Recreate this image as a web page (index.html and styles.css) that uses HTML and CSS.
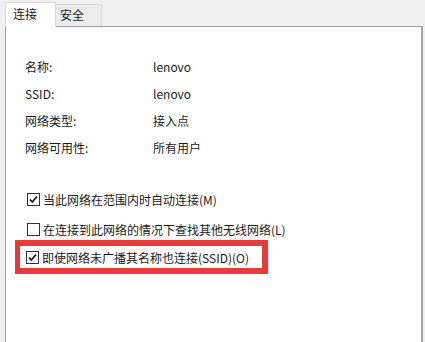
FILE: index.html
```html
<!DOCTYPE html>
<html lang="zh-CN">
<head>
  <meta charset="UTF-8">
  <title>lenovo 无线网络属性</title>
  <link rel="stylesheet" href="styles.css">
</head>
<body>
  <div class="tabs">
    <div class="tab active">连接</div>
    <div class="tab">安全</div>
  </div>
  <div class="panel">
    <!-- 网络信息 -->
    <div class="info">
      <div class="info-row"><span class="label">名称:</span><span class="value">lenovo</span></div>
      <div class="info-row"><span class="label">SSID:</span><span class="value">lenovo</span></div>
      <div class="info-row"><span class="label">网络类型:</span><span class="value">接入点</span></div>
      <div class="info-row"><span class="label">网络可用性:</span><span class="value">所有用户</span></div>
    </div>

    <!-- 选项 -->
    <div class="options">
      <div class="check-row">
        <span class="box checked">
          <svg viewBox="0 0 11 11" width="11" height="11"><path d="M2 5.5 L4.3 8 L9 2.5" fill="none" stroke="#1a1a1a" stroke-width="1.8"/></svg>
        </span>
        <span>当此网络在范围内时自动连接(M)</span>
      </div>
      <div class="check-row">
        <span class="box"></span>
        <span>在连接到此网络的情况下查找其他无线网络(L)</span>
      </div>
      <div class="check-row highlight">
        <span class="box checked">
          <svg viewBox="0 0 11 11" width="11" height="11"><path d="M2 5.5 L4.3 8 L9 2.5" fill="none" stroke="#1a1a1a" stroke-width="1.8"/></svg>
        </span>
        <span>即使网络未广播其名称也连接(SSID)(O)</span>
      </div>
    </div>
  </div>
</body>
</html>
```

FILE: styles.css
```css
body {
  margin: 0;
  background: #f0f0f0;
  font-family: "Noto Sans CJK SC", "Liberation Sans", sans-serif;
  font-size: 12px;
  color: #1a1a1a;
  height: 342px;
  overflow: hidden;
}
.tabs {
  display: flex;
  align-items: flex-start;
  padding: 2px 0 0 5px;
  height: 24px;
}
.tab {
  box-sizing: border-box;
  height: 22px;
  margin-top: 2px;
  padding: 0 0 0 4px;
  width: 46px;
  line-height: 20px;
  border: 1px solid #d9d9d9;
  border-bottom: none;
  border-left: none;
  background: #ececec;
}
.tab.active {
  position: relative;
  z-index: 1;
  width: 51px;
  height: 25px;
  margin-top: 0;
  padding-left: 7px;
  line-height: 22px;
  background: #fff;
  border-left: 1px solid #d9d9d9;
}
.panel {
  margin: 0 2px 0 5px;
  height: 330px;
  background: #fff;
  border-left: 1px solid #a0a0a0;
  border-top: 1px solid #a0a0a0;
  border-right: 2px solid #a6a6a6;
}
.info {
  padding: 26px 0 0 19px;
}
.info-row {
  display: flex;
  height: 27px;
  line-height: 27px;
}
.label {
  width: 128px;
}
.options {
  margin-top: 23px;
}
.check-row {
  display: flex;
  align-items: center;
  height: 30px;
  padding-left: 21px;
}
.box {
  box-sizing: border-box;
  width: 13px;
  height: 13px;
  border: 1px solid #333;
  background: #fff;
  margin-right: 3px;
  display: flex;
  align-items: center;
  justify-content: center;
}
.check-row.highlight {
  box-sizing: border-box;
  width: 253px;
  height: 34px;
  margin: -4px 0 0 9px;
  padding-left: 6px;
  border: 6px solid #e8393c;
  border-left-width: 5px;
  border-right-width: 6px;
}
```
